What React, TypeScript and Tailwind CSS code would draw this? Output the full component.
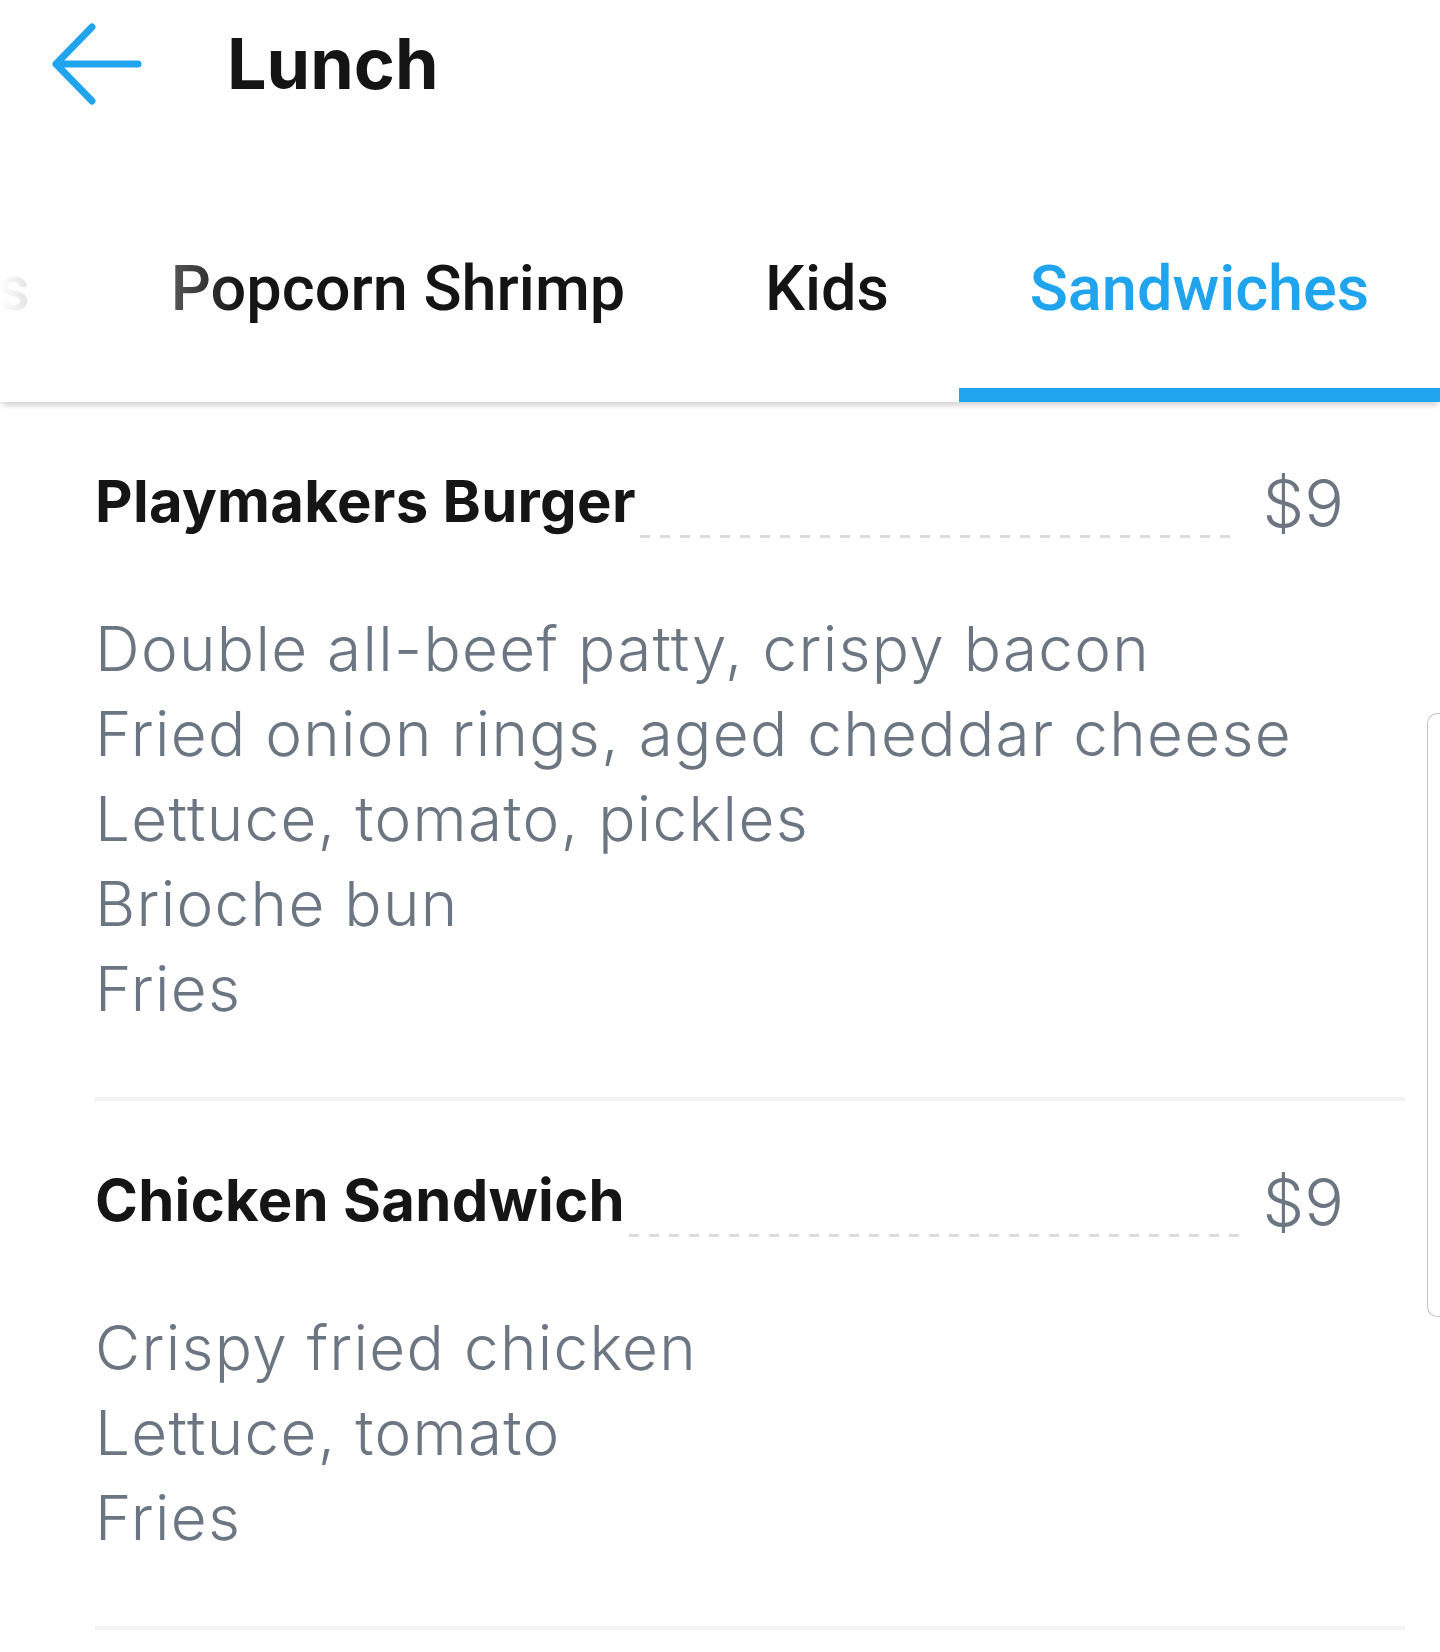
import React from "react";

const tabs = [
  { label: "Appetizers", width: "" },
  { label: "Popcorn Shrimp", width: "w-[594px]" },
  { label: "Kids", width: "w-[264px]" },
  { label: "Sandwiches", width: "w-[481px]", active: true },
];

const items = [
  {
    name: "Playmakers Burger",
    price: "$9",
    lines: [
      "Double all-beef patty, crispy bacon",
      "Fried onion rings, aged cheddar cheese",
      "Lettuce, tomato, pickles",
      "Brioche bun",
      "Fries",
    ],
  },
  {
    name: "Chicken Sandwich",
    price: "$9",
    lines: ["Crispy fried chicken", "Lettuce, tomato", "Fries"],
  },
];

function BackArrow() {
  return (
    <svg width="90" height="82" viewBox="0 0 90 82" fill="none" className="ml-[52px] shrink-0">
      <path
        d="M40 4 L4 41 L40 78 M4 41 L86 41"
        stroke="#20a4ed"
        strokeWidth="7"
        strokeLinecap="round"
        strokeLinejoin="round"
      />
    </svg>
  );
}

export default function App() {
  return (
    <div className="relative min-h-[1652px] w-[1440px] overflow-hidden bg-white font-['Inter',sans-serif]">
      {/* header */}
      <div className="flex h-[128px] items-center">
        <BackArrow />
        <h1 className="ml-[85px] text-[70px] font-bold leading-none text-[#141414]">Lunch</h1>
      </div>

      {/* tabs */}
      <div className="relative z-10 h-[274px] bg-white shadow-[0_5px_6px_-2px_rgba(0,0,0,0.2)]">
        <div className="flex h-full justify-end overflow-hidden font-['Roboto',sans-serif]">
          {tabs.map((t) => (
            <div
              key={t.label}
              className={`flex shrink-0 flex-col justify-end ${t.width || "px-[71px]"}`}
            >
              <div
                className={`pb-[68px] text-center text-[63px] font-medium leading-none ${
                  t.active ? "text-[#20a4ed]" : "text-[#141414]"
                }`}
              >
                {t.label}
              </div>
              <div className={`h-[14px] ${t.active ? "bg-[#20a4ed]" : ""}`} />
            </div>
          ))}
        </div>
        <div className="pointer-events-none absolute left-0 top-0 h-[260px] w-[240px] bg-gradient-to-r from-white to-transparent" />
      </div>

      {/* menu items */}
      <div className="ml-[95px] mr-[35px]">
        {items.map((item) => (
          <div key={item.name} className="border-b-4 border-[#f2f2f2] pb-[66px] pt-[70px]">
            <div className="flex items-start pr-[61px]">
              <div className="text-[58px] font-bold leading-none tracking-[0.3px] text-[#151515]">{item.name}</div>
              <div className="ml-[4px] mr-[24px] mt-[63px] h-[3px] flex-1 bg-[repeating-linear-gradient(90deg,#dcdcdc_0_10px,transparent_10px_20px)]" />
              <div className="-mt-[2px] text-[66px] font-light leading-none text-[#6b7682]">{item.price}</div>
            </div>
            <div className="mt-[68px]">
              {item.lines.map((line) => (
                <div key={line} className="text-[62px] font-light leading-[85px] tracking-[1.3px] text-[#6b7682]">
                  {line}
                </div>
              ))}
            </div>
          </div>
        ))}
      </div>

      {/* scroll handle */}
      <div className="absolute right-0 top-[713px] h-[604px] w-[13px] rounded-l-[10px] border border-r-0 border-[#c4c4c4] bg-white" />
    </div>
  );
}
